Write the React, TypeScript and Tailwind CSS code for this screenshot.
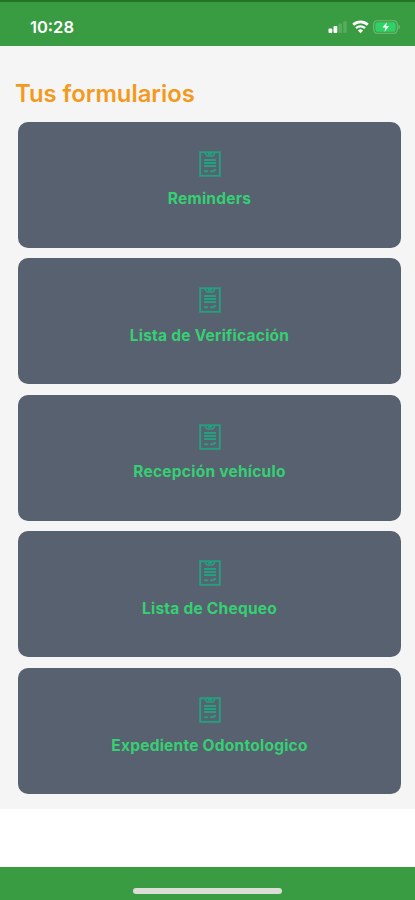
const forms = [
  "Reminders",
  "Lista de Verificación",
  "Recepción vehículo",
  "Lista de Chequeo",
  "Expediente Odontologico",
];

function FormIcon() {
  return (
    <svg width="22" height="26" viewBox="0 0 22 26" fill="none" stroke="#249f80" className="shrink-0">
      <rect x="1.2" y="1.2" width="19.6" height="23.6" strokeWidth="1.9" />
      <path d="M5.8 1.5L8 5h6l2.2-3.5M9 2.8h4" strokeWidth="1.7" />
      <path d="M5 9h12M5 12h12M5 15h12" strokeWidth="1.9" />
      <path d="M5 20.2h4.2M11 20.2h3.2l2.6-2" strokeWidth="2" />
    </svg>
  );
}

function StatusIcons() {
  return (
    <div className="flex items-center">
      <svg width="20" height="14" viewBox="0 0 20 14" className="mr-[4px]">
        <rect x="0.5" y="8.5" width="3.8" height="4.5" rx="1" fill="#fff" />
        <rect x="5.5" y="6" width="3.8" height="7" rx="1" fill="#fff" />
        <rect x="10.5" y="3.5" width="3.5" height="9.5" rx="1" fill="#56ad5c" />
        <rect x="15.2" y="1.2" width="3.5" height="11.8" rx="1" fill="#56ad5c" />
      </svg>
      <svg width="17" height="14" viewBox="0 0 17 14" fill="none" stroke="#fff" className="mr-[4px]">
        <path d="M1.2 4.8a10.5 10.5 0 0 1 14.6 0" strokeWidth="2.6" />
        <path d="M4 8.2a6.5 6.5 0 0 1 9 0" strokeWidth="2.3" />
        <path d="M8.5 13.3L6 10.5a3.6 3.6 0 0 1 5 0z" fill="#fff" stroke="none" />
      </svg>
      <svg width="28" height="14" viewBox="0 0 28 14">
        <rect x="0.7" y="0.7" width="23.6" height="12.6" rx="3.6" fill="none" stroke="#73b979" strokeWidth="1.1" />
        <rect x="2.3" y="2.3" width="20.4" height="9.4" rx="2.2" fill="#30d267" />
        <path d="M25.5 4.8c2 .8 2 3.6 0 4.4z" fill="#73b979" />
        <path d="M13.8 2.2L9.5 7.5h2.8l-.8 4.3 4.5-5.5h-2.9z" fill="#fff" />
      </svg>
    </div>
  );
}

function FormCard({ title }: { title: string }) {
  return (
    <button className="flex h-[126px] w-full shrink-0 flex-col items-center rounded-[10px] bg-[#58616f] pt-[29px]">
      <FormIcon />
      <span className="mt-[11.8px] text-[15.5px] leading-[22px] font-bold tracking-[0.24px] text-[#35d073]">
        {title}
      </span>
    </button>
  );
}

export default function App() {
  return (
    <div className="flex h-[900px] w-[415px] flex-col overflow-hidden bg-white font-['Inter',sans-serif]">
      <header className="flex h-[45.5px] shrink-0 items-start justify-between border-t-2 border-[#257425] bg-[#3a9c42] pr-[14px] pl-[30px]">
        <span className="mt-[14px] text-[16.5px] leading-[22px] font-semibold text-white">10:28</span>
        <div className="mt-[18px]">
          <StatusIcons />
        </div>
      </header>

      <main className="flex h-[763.5px] shrink-0 flex-col bg-[#f5f5f5] pr-[14px] pl-[18px]">
        <h1 className="-ml-[3px] mt-[32.5px] text-[23.8px] leading-[32px] font-semibold text-[#f39a1e]">
          Tus formularios
        </h1>
        <div className="mt-[11.5px] flex flex-col gap-[10.6px]">
          {forms.map((title) => (
            <FormCard key={title} title={title} />
          ))}
        </div>
      </main>

      <div className="flex-1" />

      <footer className="flex h-[33px] shrink-0 justify-center bg-[#3a9c42] pt-[21px]">
        <div className="h-[6px] w-[149px] rounded-full bg-[#d9dfd6]" />
      </footer>
    </div>
  );
}
